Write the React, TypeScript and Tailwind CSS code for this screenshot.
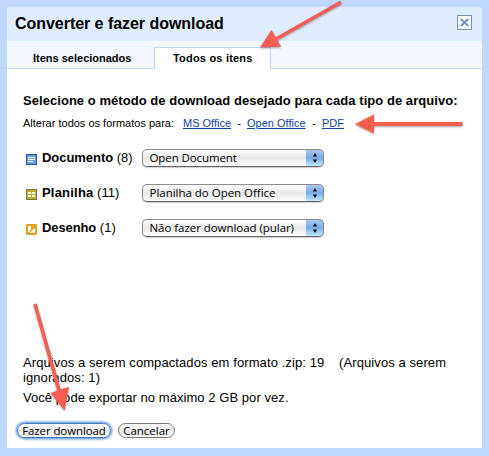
import React from 'react';

const ARIAL = "font-['Liberation_Sans',Arial,sans-serif]";
const LUCIDA = "font-['Open_Sans','Noto_Sans',sans-serif]";

function CloseIcon() {
  return (
    <svg width="15" height="15" viewBox="0 0 15 15">
      <rect x="0.5" y="0.5" width="14" height="14" fill="#fff" stroke="#6f93c4" />
      <path d="M3.8 4L11.2 11M11.2 4L3.8 11" stroke="#6f93c4" strokeWidth="2" />
    </svg>
  );
}

function DocIcon() {
  return (
    <svg width="11" height="11" viewBox="0 0 11 11" shapeRendering="crispEdges">
      <rect width="11" height="11" rx="1" fill="#2456a6" />
      <rect x="1" y="1" width="9" height="9" fill="#6a9add" />
      <path d="M2 3h7v1h-7zM2 5h7v1h-7zM2 7h5v1h-5z" fill="#fff" />
    </svg>
  );
}

function SheetIcon() {
  return (
    <svg width="11" height="11" viewBox="0 0 11 11" shapeRendering="crispEdges">
      <rect width="11" height="11" rx="1" fill="#6f7a4c" />
      <rect x="1" y="1" width="9" height="9" fill="#c5aa2c" />
      <path d="M2 3h3v2h-3zM6 3h3v2h-3zM2 6h3v2h-3zM6 6h3v2h-3z" fill="#fff" />
    </svg>
  );
}

function DrawingIcon() {
  return (
    <svg width="11" height="11" viewBox="0 0 11 11">
      <rect width="11" height="11" rx="1" fill="#dca51e" />
      <path d="M2 2h3v3.5l-2 2.5h-1zM9 4v5h-5.5z" fill="#fff" />
    </svg>
  );
}

function Select({ label, text }: { label: string; text: string }) {
  return (
    <button
      className={`flex h-[18px] w-[182px] overflow-hidden rounded-[5px] border border-[#8c8c8c] border-b-[#666] bg-linear-to-b from-white via-[#e9e9e9] to-white shadow-[0_1px_1px_#0003] ${LUCIDA}`}
    >
      <span className={`flex-1 whitespace-nowrap pl-[6.5px] text-left text-[11.5px] leading-[16px] text-black ${text}`}>
        {label}
      </span>
      <span className="-my-px -mr-px flex h-[18px] w-[18px] items-center justify-center rounded-r-[5px] border-y border-r border-[#4671b4] bg-linear-to-b from-[#a9c8f0] via-[#78aae9] to-[#c0edff]">
        <svg width="6" height="12" viewBox="0 0 6 12">
          <path d="M3 1L5.2 4.5H0.8zM3 11L0.8 7.5H5.2z" fill="#111" />
        </svg>
      </span>
    </button>
  );
}

type RowProps = { icon: React.ReactNode; name: string; count: string; value: string; nameText: string; valueText: string };

function Row({ icon, name, count, value, nameText, valueText }: RowProps) {
  return (
    <div className="flex h-[18px]">
      <span className="mr-[5px] pt-[5px]">{icon}</span>
      <span className="w-[100px] whitespace-nowrap text-[13px] leading-[17px]">
        <b className={nameText}>{name}</b> <span>({count})</span>
      </span>
      <Select label={value} text={valueText} />
    </div>
  );
}

function Arrows() {
  return (
    <svg className="pointer-events-none absolute left-0 top-0" width="489" height="456" viewBox="0 0 489 456">
      <g fill="#f45f52" style={{ filter: 'drop-shadow(0 1px 1px rgba(0,0,0,.35))' }}>
        <path d="M340 .7L341.7 3.7L277.5 40.2L281 46.7L260 47.4L271.5 30L275.8 37.2Z" />
        <path d="M462.5 122V126H374V133.5L355 124L374 114.5V122Z" />
        <path d="M33.3 304.3L36.7 303.4L60.7 389.2L69 387L64.7 410.5L50.5 393.3L57.2 390.6Z" />
      </g>
    </svg>
  );
}

export default function App() {
  return (
    <div className={`relative h-[456px] w-[489px] bg-[#c0d8ff] px-[7px] pb-2 pt-[7px] text-black ${ARIAL}`}>
      <div className="flex h-[441px] flex-col bg-white">
        <header className="flex h-[34px] shrink-0 justify-between bg-[#e0ecff] pl-2 pr-[10px] pt-2">
          <h1 className="whitespace-nowrap text-[16px] font-bold leading-[17px] tracking-[-0.04px]">
            Converter e fazer download
          </h1>
          <button aria-label="Fechar" className="h-[15px]"><CloseIcon /></button>
        </header>
        <nav className="flex h-[28px] shrink-0 items-end bg-[#f3f8ff] text-[11px] font-bold leading-[13px]">
          <div className="h-[22px] w-[147px] whitespace-nowrap border-b border-[#c0d8ff] pl-[26px] pt-[5px]">
            Itens selecionados
          </div>
          <div className="h-[22px] w-[117px] whitespace-nowrap border-x border-t border-[#c0d8ff] bg-white pl-[18px] pt-[4px] tracking-[0.2px]">
            Todos os itens
          </div>
          <div className="h-[22px] flex-1 border-b border-[#c0d8ff]" />
        </nav>
        <main className="flex flex-1 flex-col pl-4">
          <h2 className="mt-[24px] whitespace-nowrap text-[13px] font-bold leading-[15px] tracking-[0.05px]">
            Selecione o método de download desejado para cada tipo de arquivo:
          </h2>
          <p className="mt-[9px] flex h-[13px] whitespace-nowrap text-[11px] leading-[13px]">
            <span className="w-[160px]">Alterar todos os formatos para:</span>
            <a className="w-[48px] text-[#1244a5] underline">MS Office</a>
            <span className="w-[16px] text-center">-</span>
            <a className="w-[59px] text-[#1244a5] underline">Open Office</a>
            <span className="w-[16px] text-center">-</span>
            <a className="text-[#1244a5] underline">PDF</a>
          </p>
          <div className="mt-[19px] flex flex-col gap-[17px] pl-[3px]">
            <Row icon={<DocIcon />} name="Documento" count="8" value="Open Document" nameText="tracking-[-0.05px]" valueText="tracking-[-0.1px]" />
            <Row icon={<SheetIcon />} name="Planilha" count="11" value="Planilha do Open Office" nameText="tracking-[0.2px]" valueText="tracking-[-0.02px]" />
            <Row icon={<DrawingIcon />} name="Desenho" count="1" value="Não fazer download (pular)" nameText="tracking-[-0.1px]" valueText="tracking-[-0.05px]" />
          </div>
          <p className="mt-[118px] whitespace-pre text-[13px] leading-[15px] tracking-[0.09px]">
            {'Arquivos a serem compactados em formato .zip: 19    (Arquivos a serem\nignorados: 1)'}
          </p>
          <p className="mt-[5px] whitespace-nowrap text-[13px] leading-[15px] tracking-[0.06px]">
            Você pode exportar no máximo 2 GB por vez.
          </p>
          <div className={`-ml-[6px] mt-[18px] flex gap-[7px] text-[11.5px] leading-[13px] ${LUCIDA}`}>
            <button className="flex h-[15px] w-[94px] items-center justify-center whitespace-nowrap rounded-full border border-[#4679bb] bg-linear-to-b from-white via-[#e9e9e9] to-white tracking-[-0.1px] shadow-[0_0_2px_1.5px_#71a3df]">
              Fazer download
            </button>
            <button className="flex h-[15px] w-[57px] items-center justify-center whitespace-nowrap rounded-full border border-[#777] bg-linear-to-b from-white via-[#e9e9e9] to-white">
              Cancelar
            </button>
          </div>
        </main>
      </div>
      <Arrows />
    </div>
  );
}
